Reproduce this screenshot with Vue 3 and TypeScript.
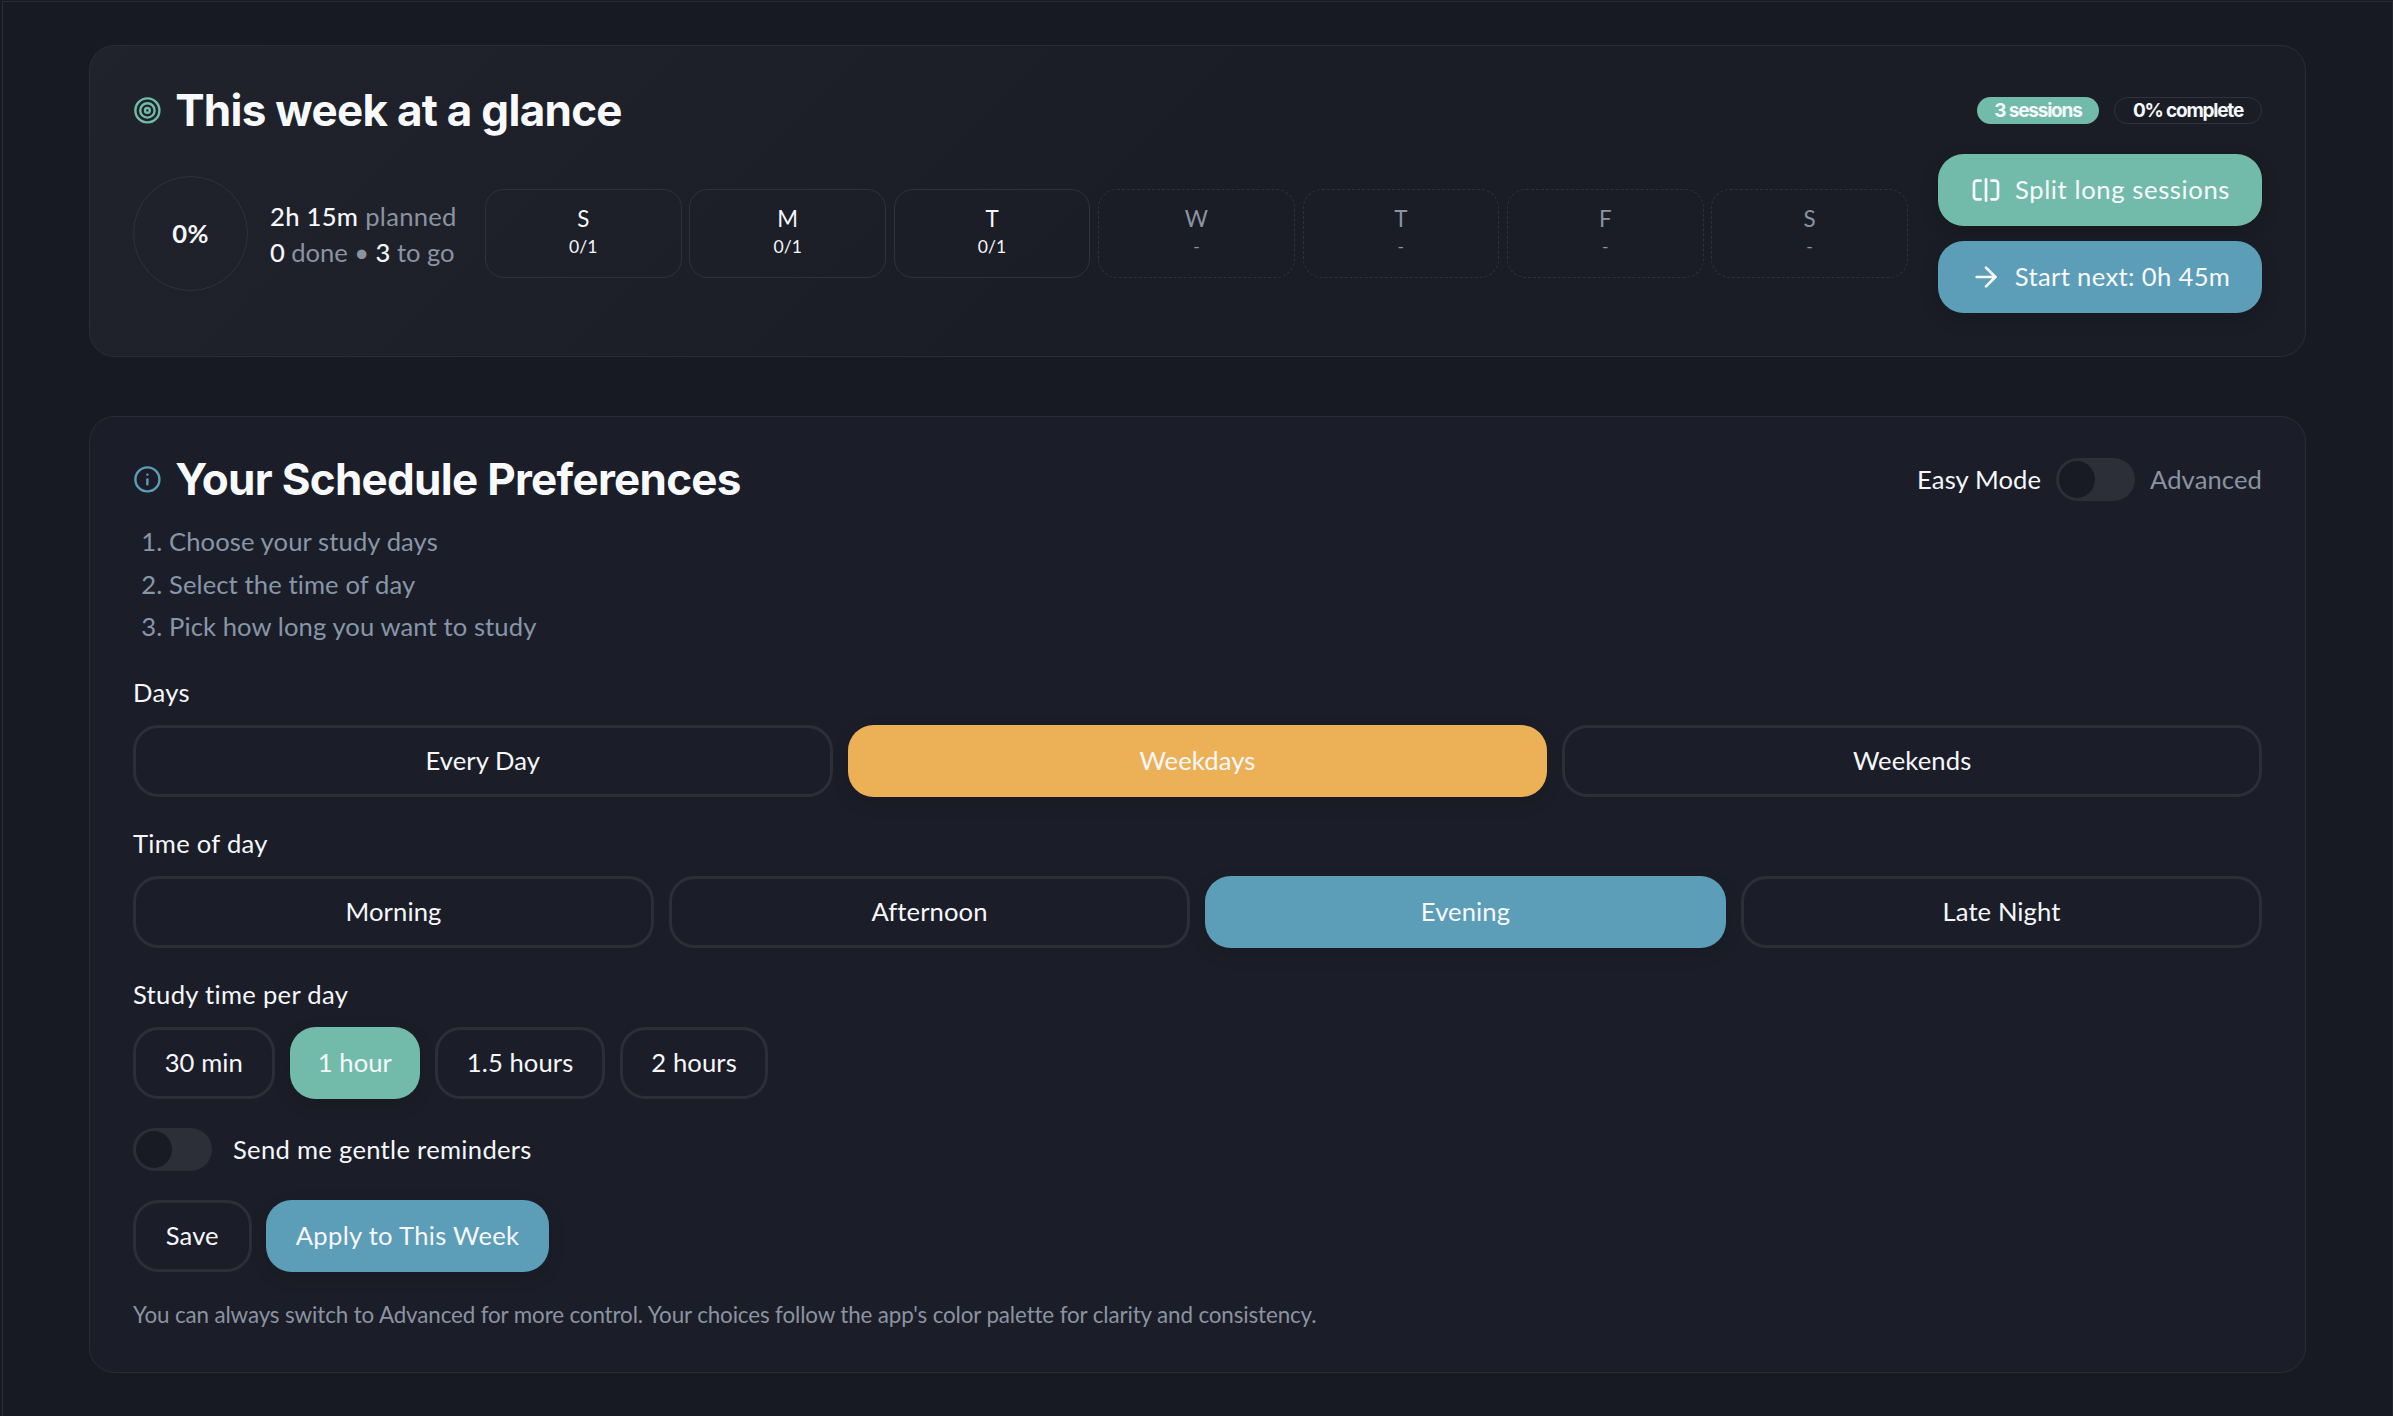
<script setup lang="ts">
interface Day { label: string; value: string; planned: boolean }
const days: Day[] = [
  { label: 'S', value: '0/1', planned: true },
  { label: 'M', value: '0/1', planned: true },
  { label: 'T', value: '0/1', planned: true },
  { label: 'W', value: '-', planned: false },
  { label: 'T', value: '-', planned: false },
  { label: 'F', value: '-', planned: false },
  { label: 'S', value: '-', planned: false },
]
const steps = ['Choose your study days', 'Select the time of day', 'Pick how long you want to study']
const dayOptions = [{ t: 'Every Day' }, { t: 'Weekdays', c: 'orange' }, { t: 'Weekends' }]
const timeOptions = [{ t: 'Morning' }, { t: 'Afternoon' }, { t: 'Evening', c: 'blue' }, { t: 'Late Night' }]
const lengths = [{ t: '30 min' }, { t: '1 hour', c: 'teal' }, { t: '1.5 hours' }, { t: '2 hours' }]
</script>

<template>
  <div class="page">
    <div class="frame">
      <section class="card glance">
        <header class="head">
          <div class="title">
            <svg class="ticon teal-s" viewBox="0 0 24 24" fill="none" stroke="currentColor" stroke-width="2" stroke-linecap="round" stroke-linejoin="round"><circle cx="12" cy="12" r="10"/><circle cx="12" cy="12" r="6"/><circle cx="12" cy="12" r="2"/></svg>
            <h2>This week at a glance</h2>
          </div>
          <div class="pills">
            <span class="pill pill-teal">3 sessions</span>
            <span class="pill pill-out">0% complete</span>
          </div>
        </header>
        <div class="row">
          <div class="ring">0%</div>
          <div class="stats">
            <div><b>2h 15m</b> <span>planned</span></div>
            <div class="stats-2"><b>0</b> <span>done • </span><b>3</b> <span>to go</span></div>
          </div>
          <div class="week">
            <div v-for="(d, i) in days" :key="i" class="day" :class="{ empty: !d.planned }">
              <div class="dl">{{ d.label }}</div>
              <div class="dv">{{ d.value }}</div>
            </div>
          </div>
          <div class="actions">
            <button class="act teal">
              <svg viewBox="0 0 24 24" fill="none" stroke="currentColor" stroke-width="2" stroke-linecap="round" stroke-linejoin="round"><path d="M8 19H5c-1 0-2-1-2-2V7c0-1 1-2 2-2h3"/><path d="M16 5h3c1 0 2 1 2 2v10c0 1-1 2-2 2h-3"/><line x1="12" y1="4" x2="12" y2="20"/></svg>
              <span class="split">Split long sessions</span>
            </button>
            <button class="act blue">
              <svg viewBox="0 0 24 24" fill="none" stroke="currentColor" stroke-width="2" stroke-linecap="round" stroke-linejoin="round"><path d="M5 12h14"/><path d="m12 5 7 7-7 7"/></svg>
              <span class="next">Start next: 0h 45m</span>
            </button>
          </div>
        </div>
      </section>

      <section class="card prefs">
        <header class="head head2">
          <div class="title">
            <svg class="ticon blue-s" viewBox="0 0 24 24" fill="none" stroke="currentColor" stroke-width="2" stroke-linecap="round" stroke-linejoin="round"><circle cx="12" cy="12" r="10"/><path d="M12 16v-4"/><path d="M12 8h.01"/></svg>
            <h2>Your Schedule Preferences</h2>
          </div>
          <div class="mode">
            <span>Easy Mode</span>
            <span class="switch"><i></i></span>
            <span class="muted">Advanced</span>
          </div>
        </header>
        <ol class="steps">
          <li v-for="s in steps" :key="s">{{ s }}</li>
        </ol>

        <div class="label">Days</div>
        <div class="grid g3">
          <button v-for="o in dayOptions" :key="o.t" class="opt" :class="o.c">{{ o.t }}</button>
        </div>

        <div class="label">Time of day</div>
        <div class="grid g4">
          <button v-for="o in timeOptions" :key="o.t" class="opt" :class="o.c">{{ o.t }}</button>
        </div>

        <div class="label">Study time per day</div>
        <div class="grid lengths">
          <button v-for="o in lengths" :key="o.t" class="opt" :class="o.c">{{ o.t }}</button>
        </div>

        <div class="remind">
          <span class="switch"><i></i></span>
          <span class="remind-text">Send me gentle reminders</span>
        </div>

        <div class="grid saves">
          <button class="opt">Save</button>
          <button class="opt blue apply">Apply to This Week</button>
        </div>

        <p class="note">You can always switch to Advanced for more control. Your choices follow the app's color palette for clarity and consistency.</p>
      </section>
    </div>
  </div>
</template>

<style>
html, body { margin: 0; background: #171a22; }
</style>

<style scoped>
.page {
  box-sizing: border-box;
  height: 1416px;
  overflow: hidden;
  padding: 1px 0 0 2px;
  background: #171a22;
  font-family: "Lato", "Noto Sans", sans-serif;
  font-size: 25.6px;
  letter-spacing: 0.1px;
  color: #f5f7fa;
}
.frame {
  box-sizing: border-box;
  height: 1415px;
  padding: 43px 86px 0 86px;
  border-top: 1px solid #2a2d36;
  border-left: 1px solid #2a2d36;
  border-right: 1px solid #22252d;
}
.card {
  box-sizing: border-box;
  border: 1.6px solid #2a2d36;
  border-radius: 25.6px;
  padding: 43px;
  background: #1b1e28;
}
.glance {
  height: 312px;
  margin-bottom: 59px;
  background: linear-gradient(135deg, #20232c 0%, #1a1d26 50%);
}
.prefs { height: 957px; padding-top: 39px; }
.head { display: flex; justify-content: space-between; align-items: center; height: 42px; }
.head2 { height: 46px; }
.title { display: flex; align-items: center; gap: 13.4px; }
.ticon { width: 28.8px; height: 28.8px; flex: none; }
.teal-s { color: #72bbaa; }
.blue-s { color: #5c9db7; }
h2 {
  margin: 0;
  font-family: "Inter", sans-serif;
  font-size: 44px;
  font-weight: 700;
  letter-spacing: -0.72px;
  color: #f8f9fb;
  line-height: 1;
}
.pills { display: flex; gap: 15px; }
.pill {
  box-sizing: border-box;
  height: 27px;
  border-radius: 14px;
  display: flex;
  align-items: center;
  justify-content: center;
  font-family: "Inter", sans-serif;
  font-weight: 700;
  font-size: 19px;
  letter-spacing: -1.2px;
}
.pill-teal { width: 122px; background: #72bbaa; }
.pill-out { width: 148px; border: 1.6px solid #2f323b; }
.row { display: flex; align-items: center; margin-top: 23px; height: 159px; }
.ring {
  box-sizing: border-box;
  width: 115px;
  height: 115px;
  flex: none;
  border-radius: 50%;
  border: 1.6px solid #2f323b;
  display: flex;
  align-items: center;
  justify-content: center;
  padding-bottom: 2px;
  font-weight: 700;
  font-size: 25.6px;
  letter-spacing: 0.4px;
}
.stats {
  margin-left: 22px;
  width: 186px;
  flex: none;
  line-height: 36px;
  letter-spacing: 0.3px;
  white-space: nowrap;
}
.stats-2 { letter-spacing: -0.05px; }
.stats b { font-weight: 500; }
.stats span { color: #8b93a1; }
.week {
  flex: 1;
  display: grid;
  grid-template-columns: repeat(7, 1fr);
  gap: 7.7px;
  margin: 0 30px 0 29px;
}
.day {
  box-sizing: border-box;
  height: 89px;
  border: 1.6px solid #2f323b;
  border-radius: 19px;
  text-align: center;
  padding-top: 15px;
}
.day.empty { border-style: dashed; color: #8b93a1; }
.dl { font-size: 22.4px; line-height: 28px; }
.dv { font-size: 17.6px; line-height: 28px; }
.actions { width: 324px; flex: none; display: flex; flex-direction: column; gap: 15px; }
button { font: inherit; letter-spacing: inherit; color: inherit; cursor: pointer; }
.act {
  height: 72px;
  border: 0;
  padding: 0 0 2px;
  border-radius: 25.6px;
  display: flex;
  align-items: center;
  justify-content: center;
  gap: 13px;
  color: #f8f9fb;
  box-shadow: 0 6px 18px rgba(0, 0, 0, 0.15);
}
.act svg { width: 32px; height: 32px; flex: none; margin-top: 2px; }
.split { letter-spacing: 0.62px; }
.next { letter-spacing: 0.35px; }
.teal { background: #72bbaa; }
.blue { background: #5c9db7; }
.orange { background: #ecb157; }
.mode { display: flex; align-items: center; gap: 15px; }
.muted { color: #8b93a1; }
.switch {
  box-sizing: border-box;
  width: 79px;
  height: 43px;
  padding: 3px;
  border-radius: 22px;
  background: #2c2f38;
  display: inline-block;
  flex: none;
}
.switch i { display: block; width: 36px; height: 37px; border-radius: 50%; background: #181b23; }
.steps {
  margin: 18px 0 -2px;
  padding: 0 0 0 36px;
  color: #8796a8;
  line-height: 42.7px;
}
.label { margin: 28px 0 15px; line-height: 36px; letter-spacing: 0.3px; }
.grid { display: grid; gap: 15px; }
.g3 { grid-template-columns: repeat(3, 1fr); }
.g4 { grid-template-columns: repeat(4, 1fr); }
.lengths { grid-template-columns: 141.6px 130.5px 170px 148px; justify-content: start; }
.saves { grid-template-columns: 118.5px 283px; gap: 14.6px; justify-content: start; margin-top: 29px; }
.opt {
  box-sizing: border-box;
  height: 72px;
  border: 3px solid #2c2f38;
  border-radius: 25.6px;
  background: transparent;
  color: #f5f7fa;
  padding: 0 0 3px;
}
.opt.teal, .opt.blue, .opt.orange { border-color: transparent; box-shadow: 0 6px 18px rgba(0, 0, 0, 0.12); }
.opt.teal { background: #72bbaa; }
.opt.blue { background: #5c9db7; }
.opt.orange { background: #ecb157; }
.apply { letter-spacing: 0.3px; }
.remind { display: flex; align-items: center; gap: 21px; margin-top: 29px; height: 43px; }
.remind-text { letter-spacing: 0.3px; padding-bottom: 2px; }
.note { margin: 25px 0 0; font-size: 22.4px; letter-spacing: -0.13px; color: #8b93a1; line-height: 36px; }
</style>
